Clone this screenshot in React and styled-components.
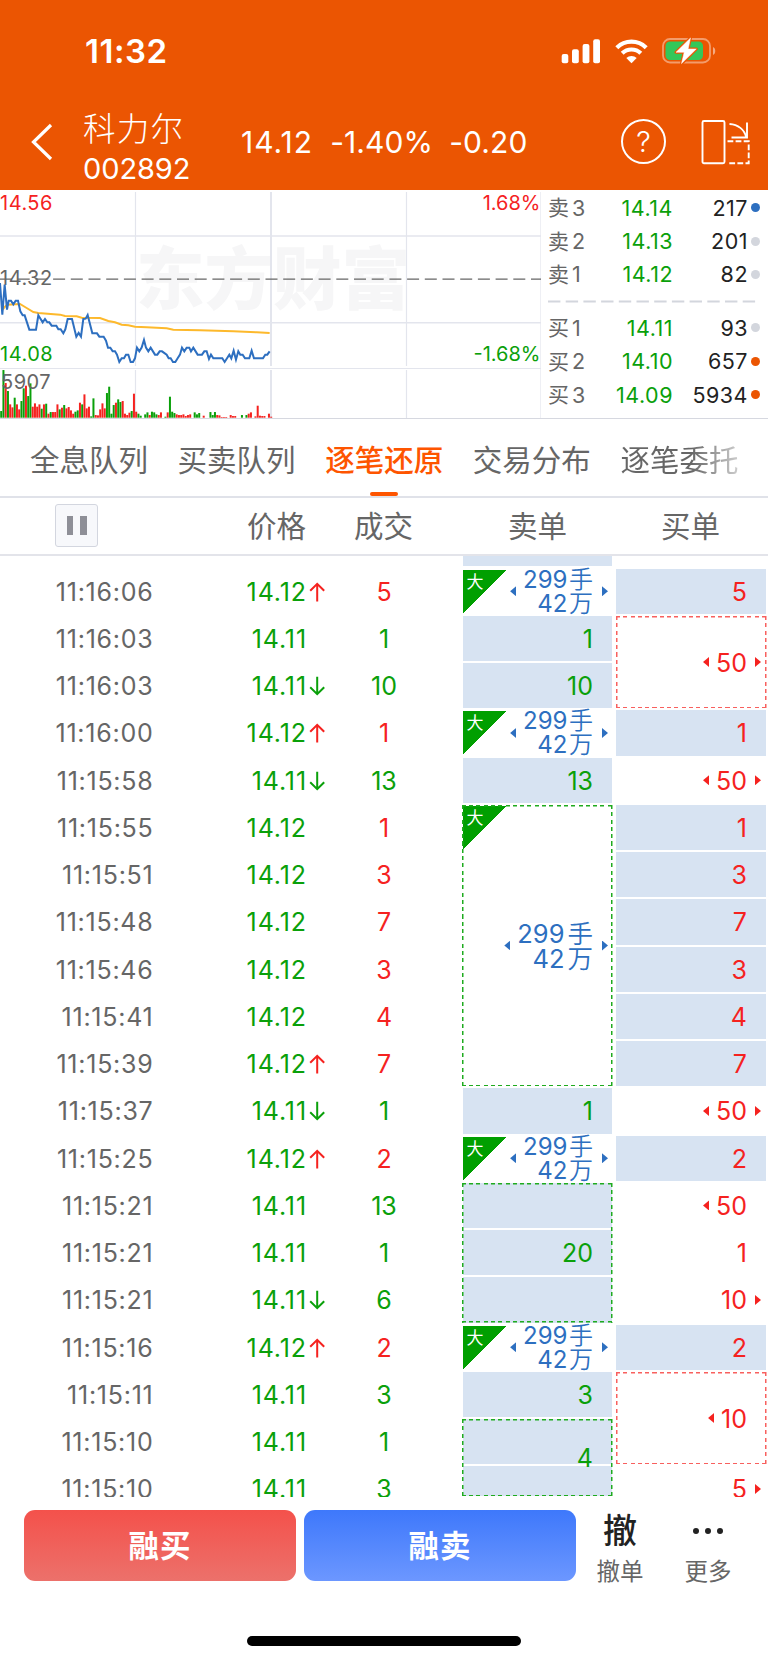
import React from 'react';
import styled, { createGlobalStyle } from 'styled-components';

const GREEN = '#0aa00a';
const RED = '#f5221f';
const BLUE = '#2d6fc0';

const asks = [
  { label: '卖', level: 3, price: '14.14', qty: 217, dot: '#2d6fc0' },
  { label: '卖', level: 2, price: '14.13', qty: 201, dot: '#d3d6dd' },
  { label: '卖', level: 1, price: '14.12', qty: 82, dot: '#d3d6dd' },
];

const bids = [
  { label: '买', level: 1, price: '14.11', qty: 93, dot: '#d3d6dd' },
  { label: '买', level: 2, price: '14.10', qty: 657, dot: '#eb5502' },
  { label: '买', level: 3, price: '14.09', qty: 5934, dot: '#eb5502' },
];

const tabs = ['全息队列', '买卖队列', '逐笔还原', '交易分布', '逐笔委托'];

// time, price, arrow, volume, side
const ticks = [
  ['11:16:06', '14.12', 'up', 5, 'buy'],
  ['11:16:03', '14.11', '', 1, 'sell'],
  ['11:16:03', '14.11', 'down', 10, 'sell'],
  ['11:16:00', '14.12', 'up', 1, 'buy'],
  ['11:15:58', '14.11', 'down', 13, 'sell'],
  ['11:15:55', '14.12', '', 1, 'buy'],
  ['11:15:51', '14.12', '', 3, 'buy'],
  ['11:15:48', '14.12', '', 7, 'buy'],
  ['11:15:46', '14.12', '', 3, 'buy'],
  ['11:15:41', '14.12', '', 4, 'buy'],
  ['11:15:39', '14.12', 'up', 7, 'buy'],
  ['11:15:37', '14.11', 'down', 1, 'sell'],
  ['11:15:25', '14.12', 'up', 2, 'buy'],
  ['11:15:21', '14.11', '', 13, 'sell'],
  ['11:15:21', '14.11', '', 1, 'sell'],
  ['11:15:21', '14.11', 'down', 6, 'sell'],
  ['11:15:16', '14.12', 'up', 2, 'buy'],
  ['11:15:11', '14.11', '', 3, 'sell'],
  ['11:15:10', '14.11', '', 1, 'sell'],
  ['11:15:10', '14.11', '', 3, 'sell'],
];

const sellOrders = [
  { row: 0, big: true },
  { row: 1, text: '1', fill: true },
  { row: 2, text: '10', fill: true },
  { row: 3, big: true },
  { row: 4, text: '13', fill: true },
  { row: 5, span: 6, big: true, dashed: true },
  { row: 11, text: '1', fill: true },
  { row: 12, big: true },
  { row: 13, span: 3, text: '20', fill: true, dashed: true },
  { row: 16, big: true },
  { row: 17, text: '3', fill: true },
  { row: 18, span: 2, text: '4', fill: true, dashed: true, cut: true },
];

const buyOrders = [
  { row: 0, text: '5', fill: true },
  { row: 1, span: 2, text: '50', left: true, right: true, dashed: true },
  { row: 3, text: '1', fill: true },
  { row: 4, text: '50', left: true, right: true },
  { row: 5, text: '1', fill: true },
  { row: 6, text: '3', fill: true },
  { row: 7, text: '7', fill: true },
  { row: 8, text: '3', fill: true },
  { row: 9, text: '4', fill: true },
  { row: 10, text: '7', fill: true },
  { row: 11, text: '50', left: true, right: true },
  { row: 12, text: '2', fill: true },
  { row: 13, text: '50', left: true },
  { row: 14, text: '1' },
  { row: 15, text: '10', right: true },
  { row: 16, text: '2', fill: true },
  { row: 17, span: 2, text: '10', left: true, dashed: true },
  { row: 19, text: '5', right: true },
];

const pricePoints =
  '0,285 7,380 14,290 21,365 26,338 33,338 40,349 47,338 54,338 61,370 68,382 74,382 88,425 108,425 115,382 128,403 135,393 142,403 148,403 155,413 169,413 175,424 182,424 190,436 196,424 203,393 216,393 229,446 236,435 243,446 250,393 257,392 263,381 277,436 291,436 298,446 311,446 318,458 324,479 331,479 338,490 345,490 351,500 358,522 365,511 372,511 378,500 385,500 392,522 399,522 405,511 411,479 418,490 425,479 432,456 438,479 445,490 452,479 465,500 472,500 479,490 486,490 500,500 506,511 512,511 519,522 526,522 533,511 540,500 546,479 553,490 560,479 568,479 573,490 580,479 593,500 606,500 613,490 620,490 627,513 633,500 640,511 667,511 674,522 688,500 694,511 701,488 708,515 715,490 721,500 728,500 735,511 748,511 755,488 762,511 789,511 796,500 802,500 809,490';

const averagePoints =
  '8,365 14,357 22,350 60,348 80,360 100,372 115,375 180,380 195,384 230,385 245,389 300,390 325,399 345,403 365,410 385,412 405,416 440,418 500,421 520,425 600,427 700,430 770,433 809,435';

// one bar a minute, r = up, g = down
const volumes =
  'g20 g143 r104 g80 r40 r31 g60 r40 r25 g50 g88 r96 g65 g103 r33 r43 r33 r40 g27 r40 g42 r12 g17 r17 r17 r40 g25 r30 g38 r28 r32 r22 r12 g18 g22 r45 g40 r70 r28 r33 g4 g58 r8 r7 r25 r43 r28 g74 g93 g12 g38 r45 g55 g47 r50 r12 r8 r15 g20 r72 r18 g12 g6 g0 g10 g16 r8 g18 g16 g10 r8 r16 g0 g3 r16 g63 g18 g14 r10 r8 r8 r10 r5 r8 r10 r0 g16 g10 g14 g0 r6 g0 g0 g17 g8 g17 r8 r7 r2 r2 r2 g0 r8 r5 r5 g0 g0 g8 g0 g8 r12 r16 g0 r4 r36 r6 r5 r5 g0 r12 r3'
    .split(' ')
    .map((v) => ({ color: v[0] === 'r' ? RED : GREEN, h: Number(v.slice(1)) / 3 }));

const BatteryIcon = () => (
  <svg width="54" height="28" viewBox="0 0 54 28">
    <rect x="1" y="2" width="47" height="23.5" rx="7" fill="none" stroke="#fff" strokeOpacity="0.42" strokeWidth="1.8" />
    <path d="M51 10v8c3-1.2 3-6.8 0-8z" fill="#fff" fillOpacity="0.5" />
    <rect x="3.5" y="4.5" width="37.5" height="18.5" rx="4.5" fill="#34c759" />
    <path d="M28.5 1 14 15.3h8.2L19.5 26.6 34.3 12h-8.2z" fill="#fff" stroke="#eb5502" strokeWidth="3" strokeLinejoin="round" />
    <path d="M28.5 1 14 15.3h8.2L19.5 26.6 34.3 12h-8.2z" fill="#fff" stroke="#fff" strokeWidth="0.5" strokeLinejoin="round" />
  </svg>
);

const WifiIcon = () => (
  <svg width="33" height="25" viewBox="0 0 33 25">
    <g fill="none" stroke="#fff" strokeWidth="4.2">
      <path d="M1.8 8.7a21 21 0 0 1 29.4 0" />
      <path d="M7.2 14.2a13.5 13.5 0 0 1 18.6 0" />
    </g>
    <path d="M16.5 24.2 11.3 19a7.5 7.5 0 0 1 10.4 0z" fill="#fff" />
  </svg>
);

const SignalIcon = () => (
  <svg width="40" height="25" viewBox="0 0 40 25">
    <g fill="#fff">
      <rect x="0.7" y="15" width="6.6" height="9.2" rx="2" />
      <rect x="11" y="10.3" width="6.8" height="13.9" rx="2" />
      <rect x="21.6" y="5" width="6.8" height="19.2" rx="2" />
      <rect x="32.2" y="0.2" width="6.8" height="24" rx="2" />
    </g>
  </svg>
);

const RotateIcon = () => (
  <svg width="50" height="46" viewBox="0 0 50 46">
    <g fill="none" stroke="#fff" strokeWidth="1.9">
      <rect x="1.5" y="2" width="22" height="42.2" rx="1.5" />
      <path d="M28.5 5C37 5.5 43.5 10.5 45 18" />
      <path d="M46 3.5V18.5H30.5" />
      <path d="M26.5 22.3H47.7V44.2H26.5" strokeDasharray="5.8 2.3" />
    </g>
  </svg>
);

const Arrow = ({ dir }) => (
  <svg width="17" height="20" viewBox="0 0 17 20">
    {dir === 'up' && <path d="M8.2 19.5V2M1.2 8.8 8.2 1.8 15.2 8.8" fill="none" stroke={RED} strokeWidth="2" />}
    {dir === 'down' && <path d="M8.2 0.8V18M1.2 11.2 8.2 18.2 15.2 11.2" fill="none" stroke={GREEN} strokeWidth="2" />}
  </svg>
);

const TrendChart = () => (
  <svg width="541" height="228" viewBox="0 0 541 228">
    <text x="136" y="114" fontSize="68.5" fontWeight="900" fill="#f6f6f7">东方财富</text>
    <g stroke="#e3e5ed" fill="none">
      <path d="M0 46H541M0 132.7H541" strokeWidth="1.5" />
      <path d="M135.5 2V176M135.5 180V228M406.5 2V176M406.5 180V228" strokeWidth="1.2" />
      <path d="M271 2V176M271 180V228" strokeWidth="2" />
      <path d="M0 178.5H541M541 2V228" strokeWidth="1.2" />
    </g>
    {volumes.map((v, i) => (
      <rect key={i} x={0.2 + i * 2.25} y={227.7 - v.h} width="2" height={v.h} fill={v.color} />
    ))}
    <g fontSize="20" letterSpacing="0.5">
      <text x="0" y="20" fill={RED}>14.56</text>
      <text x="0" y="95.2" fill="#666">14.32</text>
      <text x="0" y="170.8" fill={GREEN}>14.08</text>
      <text x="1" y="199" fill="#666">5907</text>
    </g>
    <g fontSize="20" textAnchor="end">
      <text x="540.5" y="20" fill={RED}>1.68%</text>
      <text x="540.5" y="170.8" fill={GREEN}>-1.68%</text>
    </g>
    <path d="M0 89.2H541" stroke="#666" strokeWidth="1.3" strokeDasharray="12 5.7" />
    <g transform="translate(0 -2) scale(0.3333)" fill="none" strokeWidth="6">
      <polyline points={averagePoints} stroke="#fdb92c" />
      <polyline points={pricePoints} stroke={BLUE} />
    </g>
  </svg>
);

const QuoteRow = ({ data }) => (
  <StyledQuoteRow $dot={data.dot}>
    <span className="label">{data.label}</span>
    <span className="level">{data.level}</span>
    <span className="price">{data.price}</span>
    <span className="qty">{data.qty}</span>
    <i />
  </StyledQuoteRow>
);

const Order = ({ order, side }) => {
  const { row, span = 1, text, fill, big, dashed, left, right, cut } = order;
  return (
    <OrderCell $row={row} $span={span} $side={side} $dashed={dashed} $cut={cut} $big={big}>
      {fill && (
        <Stripes>
          {Array.from({ length: span }, (_, i) => <i key={i} />)}
        </Stripes>
      )}
      {big && <BigTag><span>大</span></BigTag>}
      <Triangle $dir="left" $hidden={!left && !big} />
      {big ? (
        <BigValue $large={span > 1}>
          <div>299<b>手</b></div>
          <div>42<b>万</b></div>
        </BigValue>
      ) : (
        <OrderValue>{text}</OrderValue>
      )}
      <Triangle $dir="right" $hidden={!right && !big} />
    </OrderCell>
  );
};

const App = () => {
  return (
    <Page>
      <GlobalStyle />
      <Header>
        <StatusBar>
          <time>11:32</time>
          <div>
            <SignalIcon />
            <WifiIcon />
            <BatteryIcon />
          </div>
        </StatusBar>
        <NavBar>
          <svg width="22" height="38" viewBox="0 0 22 38">
            <path d="M20 2 2.5 19 20 36" fill="none" stroke="#fff" strokeWidth="3.2" />
          </svg>
          <StockName>
            <h1>科力尔</h1>
            <span>002892</span>
          </StockName>
          <Quote>
            <span>14.12</span>
            <span>-1.40%</span>
            <span>-0.20</span>
          </Quote>
          <Help>?</Help>
          <RotateIcon />
        </NavBar>
      </Header>

      <Market>
        <TrendChart />
        <QuoteList>
          {asks.map((a) => <QuoteRow key={a.price} data={a} />)}
          <svg width="208" height="20">
            <path d="M0 10.500H208" stroke="#d3d6dd" strokeWidth="2" strokeDasharray="12.4 5.3" />
          </svg>
          {bids.map((b) => <QuoteRow key={b.price} data={b} />)}
        </QuoteList>
      </Market>

      <Tabs>
        {tabs.map((t, i) => <Tab key={t} $active={i === 2} $faded={i === 4}>{t}</Tab>)}
      </Tabs>

      <TableHead>
        <PauseButton><i /><i /></PauseButton>
        <span>价格</span>
        <span>成交</span>
        <span>卖单</span>
        <span>买单</span>
      </TableHead>

      <TickTable>
        <Leftover />
        {ticks.map(([time, price, arrow, volume, side], i) => (
          <TickRow key={i} $row={i}>
            <span className="time">{time}</span>
            <span className="price">{price}</span>
            <Arrow dir={arrow} />
            <Volume $side={side}>{volume}</Volume>
          </TickRow>
        ))}
        {sellOrders.map((o) => <Order key={`s${o.row}`} order={o} side="sell" />)}
        {buyOrders.map((o) => <Order key={`b${o.row}`} order={o} side="buy" />)}
      </TickTable>

      <Footer>
        <TradeButton $from="#f4514b" $to="#ec716b">融买</TradeButton>
        <TradeButton $from="#3e78fb" $to="#6c97ff">融卖</TradeButton>
        <Action>
          <strong>撤</strong>
          <span>撤单</span>
        </Action>
        <Action>
          <Dots><i /><i /><i /></Dots>
          <span>更多</span>
        </Action>
      </Footer>
      <HomeIndicator />
    </Page>
  );
};

const GlobalStyle = createGlobalStyle`
  * {
    box-sizing: border-box;
  }

  body {
    margin: 0;
    background: #fff;
    font-family: Inter, "Noto Sans CJK SC", sans-serif;
  }

  svg {
    display: block;
    flex-shrink: 0;
  }
`;

const Page = styled.div`
  width: 768px;
  height: 1663px;
  overflow: hidden;
  display: flex;
  flex-direction: column;
`;

const Header = styled.header`
  height: 190px;
  flex-shrink: 0;
  background: #eb5502;
  color: #fff;
`;

const StatusBar = styled.div`
  height: 102px;
  padding: 0 52px 0 85px;
  display: flex;
  align-items: center;
  justify-content: space-between;

  time {
    font-size: 33px;
    font-weight: 600;
    letter-spacing: 0.5px;
  }

  div {
    display: flex;
    align-items: center;
    gap: 14px;
  }
`;

const NavBar = styled.div`
  height: 79px;
  padding: 0 17px 0 31px;
  display: flex;
  align-items: center;
`;

const StockName = styled.div`
  width: 158px;
  margin-left: 30px;
  margin-top: 15px;

  h1 {
    margin: 0;
    font-size: 32.5px;
    line-height: 40px;
    font-weight: 300;
    letter-spacing: 1.2px;
  }

  span {
    display: block;
    font-size: 29px;
    line-height: 38px;
    letter-spacing: -0.1px;
  }
`;

const Quote = styled.div`
  display: flex;
  gap: 17px;
  width: 380px;
  font-size: 30px;
  letter-spacing: 0.1px;

  span:first-child {
    letter-spacing: 1px;
  }

  span:last-child {
    margin-left: -1px;
  }
`;

const Help = styled.div`
  width: 45px;
  height: 45px;
  margin-right: 35px;
  border: 2px solid #fff;
  border-radius: 50%;
  font-size: 29px;
  font-weight: 300;
  line-height: 42px;
  text-align: center;
  flex-shrink: 0;
`;

const Market = styled.section`
  display: flex;
  height: 229px;
  flex-shrink: 0;
  border-bottom: 1px solid #d6d8e0;
`;

const QuoteList = styled.div`
  padding: 1px 0 0 7px;
`;

const StyledQuoteRow = styled.div`
  display: flex;
  align-items: center;
  height: 33.4px;
  width: 212px;
  font-size: 21.5px;
  letter-spacing: 0.5px;
  color: #666;

  .label {
    width: 24px;
    font-size: 21px;
    line-height: 33px;
  }

  .price {
    flex: 1;
    color: ${GREEN};
    text-align: right;
  }

  .qty {
    width: 75px;
    color: #222;
    text-align: right;
  }

  i {
    width: 9px;
    height: 9px;
    margin-left: 3px;
    border-radius: 50%;
    background: ${(p) => p.$dot};
  }
`;

const Tabs = styled.nav`
  display: flex;
  gap: 29.6px;
  height: 79px;
  padding-left: 30px;
  flex-shrink: 0;
  border-bottom: 2px solid #e0e2e9;
`;

const Tab = styled.div`
  display: flex;
  flex-direction: column;
  align-items: center;
  justify-content: space-between;
  flex-shrink: 0;
  font-size: 29.5px;
  line-height: 82px;
  height: 77px;
  font-weight: ${(p) => (p.$active ? 500 : 400)};
  color: ${(p) => (p.$active ? '#fe5500' : '#666')};
  ${(p) => p.$faded && `
    color: transparent;
    background: linear-gradient(90deg, #666 60%, #ccc 100%);
    background-clip: text;
  `}
  ${(p) => p.$active && `
    &::after {
      content: '';
      width: 28px;
      height: 4px;
      margin-top: -9px;
      border-radius: 2px;
      background: #fe5500;
    }
  `}
`;

const TableHead = styled.div`
  display: grid;
  grid-template-columns: 225px 103px 111px 197px 109px;
  align-items: center;
  height: 58px;
  flex-shrink: 0;
  border-bottom: 2px solid #e3e4ea;
  color: #666;
  font-size: 29.5px;
  line-height: 56px;
  text-align: center;
`;

const PauseButton = styled.button`
  width: 43px;
  height: 43px;
  margin: -2px 0 0 55px;
  padding: 0;
  display: flex;
  justify-content: center;
  align-items: center;
  gap: 7px;
  border: 1px solid #d3d6df;
  border-radius: 3px;
  background: #f7f8fb;

  i {
    width: 6.5px;
    height: 19px;
    background: #8e8f97;
  }
`;

const TickTable = styled.div`
  display: grid;
  grid-template-columns: 462.5px 149.5px 4px 150px;
  grid-template-rows: 11.5px repeat(20, 47.25px);
  height: 941px;
  flex-shrink: 0;
  overflow: hidden;
`;

const Leftover = styled.div`
  grid-area: 1 / 2;
  height: 10px;
  background: #d7e3f2;
`;

const TickRow = styled.div`
  grid-column: 1;
  grid-row: ${(p) => p.$row + 2};
  display: grid;
  grid-template-columns: 153.5px 153.5px 17px 120px;
  align-items: center;
  padding-top: 1px;
  font-size: 25px;
  line-height: 30px;
  color: #666;

  .time {
    text-align: right;
    letter-spacing: 0.75px;
  }

  .price {
    text-align: right;
    letter-spacing: 0.9px;
    color: ${GREEN};
  }

  svg {
    margin-left: 1.5px;
  }
`;

const Volume = styled.span`
  text-align: center;
  color: ${(p) => (p.$side === 'buy' ? RED : GREEN)};
`;

const OrderCell = styled.div`
  --dash: ${(p) => (p.$side === 'sell' ? '#1fab1f' : '#f8605e')};
  position: relative;
  grid-column: ${(p) => (p.$side === 'sell' ? 2 : 4)};
  grid-row: ${(p) => `${p.$row + 2} / span ${p.$span}`};
  display: flex;
  align-items: center;
  justify-content: flex-end;
  padding-right: ${(p) => (p.$big ? 4 : 5)}px;
  color: ${(p) => (p.$big ? BLUE : p.$side === 'sell' ? GREEN : RED)};
  ${(p) => p.$cut && `
    height: 79px;
  `}

  &::after {
    content: '';
    display: ${(p) => (p.$dashed ? 'block' : 'none')};
    position: absolute;
    inset: 1px -0.5px 1px -0.5px;
    background:
      repeating-linear-gradient(90deg, var(--dash) 0 4px, transparent 4px 7.3px) top / 100% 1.5px no-repeat,
      repeating-linear-gradient(90deg, var(--dash) 0 4px, transparent 4px 7.3px) bottom / 100% 1.5px no-repeat,
      repeating-linear-gradient(180deg, var(--dash) 0 4px, transparent 4px 7.3px) left / 1.5px 100% no-repeat,
      repeating-linear-gradient(180deg, var(--dash) 0 4px, transparent 4px 7.3px) right / 1.5px 100% no-repeat;
  }
`;

// filled background of every tick the order covers
const Stripes = styled.div`
  position: absolute;
  inset: 1px 0;
  display: flex;
  flex-direction: column;
  gap: 2px;
  overflow: hidden;

  i {
    flex: 0 0 45.25px;
    background: #d7e3f2;
  }
`;

const BigTag = styled.div`
  position: absolute;
  top: 2px;
  left: 0;
  width: 43px;
  height: 43px;
  background: linear-gradient(135deg, #009f00 50%, transparent 50.5%);

  span {
    position: absolute;
    left: 4px;
    top: 4px;
    font-size: 17px;
    line-height: 17px;
    color: #fff;
  }
`;

const Triangle = styled.i`
  position: relative;
  width: 6px;
  height: 10px;
  background: currentColor;
  visibility: ${(p) => (p.$hidden ? 'hidden' : 'visible')};
  clip-path: ${(p) => (p.$dir === 'left' ? 'polygon(100% 0, 100% 100%, 0 50%)' : 'polygon(0 0, 0 100%, 100% 50%)')};
`;

const OrderValue = styled.span`
  position: relative;
  margin: 0 8px 0 7px;
  padding-top: 1px;
  font-size: 25px;
  line-height: 30px;
`;

const BigValue = styled.div`
  margin: 1px 9px 0 7px;
  text-align: right;
  font-size: ${(p) => (p.$large ? 25.5 : 24)}px;
  line-height: ${(p) => (p.$large ? 25 : 24)}px;

  div {
    display: flex;
    justify-content: flex-end;
  }

  b {
    margin-left: ${(p) => (p.$large ? 3 : 1.5)}px;
    font-weight: 350;
  }
`;

const Footer = styled.footer`
  display: flex;
  gap: 8px;
  height: 139px;
  padding: 13px 16px 0 24px;
  flex-shrink: 0;
`;

const TradeButton = styled.button`
  width: 272px;
  height: 71px;
  padding: 0 0 4px;
  border: none;
  border-radius: 11px;
  background: linear-gradient(180deg, ${(p) => p.$from}, ${(p) => p.$to});
  color: #fff;
  font-family: inherit;
  font-size: 30.5px;
  font-weight: 700;
  letter-spacing: 1px;
`;

const Action = styled.div`
  display: flex;
  flex-direction: column;
  align-items: center;
  width: 72px;
  color: #666;

  & + & {
    margin-left: 8px;
  }

  strong {
    font-size: 34px;
    line-height: 42px;
    font-weight: 500;
    color: #222;
  }

  span {
    font-size: 23.5px;
    line-height: 39px;
  }
`;

const Dots = styled.div`
  display: flex;
  align-items: center;
  gap: 6px;
  height: 42px;

  i {
    width: 6px;
    height: 6px;
    border-radius: 50%;
    background: #222;
  }
`;

const HomeIndicator = styled.div`
  width: 274px;
  height: 10px;
  margin: 0 auto;
  border-radius: 5px;
  background: #000;
  flex-shrink: 0;
`;

export default App;
